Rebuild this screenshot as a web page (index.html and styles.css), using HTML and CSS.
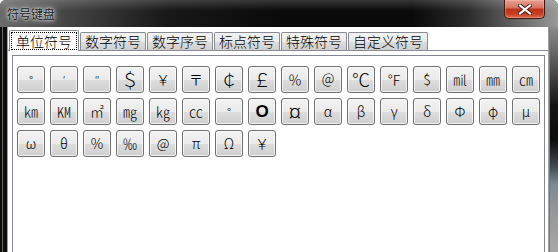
FILE: index.html
```html
<!DOCTYPE html>
<html lang="zh">
<head>
<meta charset="utf-8">
<title>符号键盘</title>
<link rel="stylesheet" href="styles.css">
</head>
<body>
<div class="window">
  <div class="titlebar">
    <span class="title">符号键盘</span>
    <div class="close">
      <svg width="14" height="11" viewBox="0 0 14 11">
        <path d="M2 1.5 L12 9.5 M12 1.5 L2 9.5" stroke="#3b1a14" stroke-width="4" stroke-linecap="square"/>
        <path d="M2 1.5 L12 9.5 M12 1.5 L2 9.5" stroke="#ffffff" stroke-width="2.2" stroke-linecap="square"/>
      </svg>
    </div>
  </div>
  <div class="frame-body">
    <div class="edge-left"></div>
    <div class="client">
      <div class="tabs">
        <div class="tab active"><span class="focus">单位符号</span></div>
        <div class="tab">数字符号</div>
        <div class="tab">数字序号</div>
        <div class="tab">标点符号</div>
        <div class="tab">特殊符号</div>
        <div class="tab">自定义符号</div>
      </div>
      <div class="panel">
        <div class="box">
          <div class="grid">
            <button class="key small">°</button>
            <button class="key small">′</button>
            <button class="key small">″</button>
            <button class="key big">＄</button>
            <button class="key">￥</button>
            <button class="key">〒</button>
            <button class="key big">￠</button>
            <button class="key big">￡</button>
            <button class="key">％</button>
            <button class="key">＠</button>
            <button class="key big">℃</button>
            <button class="key">℉</button>
            <button class="key">$</button>
            <button class="key">㏕</button>
            <button class="key">㎜</button>
            <button class="key">㎝</button>

            <button class="key">㎞</button>
            <button class="key">㏎</button>
            <button class="key">㎡</button>
            <button class="key">㎎</button>
            <button class="key">㎏</button>
            <button class="key">㏄</button>
            <button class="key small">°</button>
            <button class="key bold">O</button>
            <button class="key huge">¤</button>
            <button class="key">α</button>
            <button class="key">β</button>
            <button class="key">γ</button>
            <button class="key">δ</button>
            <button class="key">Φ</button>
            <button class="key">φ</button>
            <button class="key">μ</button>

            <button class="key">ω</button>
            <button class="key">θ</button>
            <button class="key">%</button>
            <button class="key">‰</button>
            <button class="key">@</button>
            <button class="key">π</button>
            <button class="key">Ω</button>
            <button class="key">￥</button>
          </div>
        </div>
      </div>
    </div>
    <div class="edge-right"></div>
  </div>
</div>
</body>
</html>
```

FILE: styles.css
```css
* { box-sizing: border-box; }

html, body {
  margin: 0;
  padding: 0;
  width: 558px;
  height: 252px;
  overflow: hidden;
  background: #ffffff;
}

.window {
  width: 558px;
  height: 252px;
  display: flex;
  flex-direction: column;
  border-radius: 6px 6px 0 0;
  overflow: hidden;
  background: #101010;
}

.titlebar {
  height: 27px;
  flex: none;
  display: flex;
  align-items: flex-start;
  justify-content: space-between;
  padding: 0 13px 0 7px;
  background:
    linear-gradient(to bottom, rgba(255,255,255,0.18) 0, rgba(255,255,255,0) 40%),
    linear-gradient(to right, #6a6a6a 0, #444 12%, #181818 30%, #0a0a0a 50%, #0a0a0a 74%, #2c2c2c 84%, #6e6e6e 94%, #9a9a9a 100%);
}

.title {
  margin-top: 5px;
  font-family: "Noto Sans CJK SC", sans-serif;
  font-size: 12px;
  line-height: 17px;
  color: #1a1a1a;
  text-shadow: 0 0 2px #e6e6e6, 0 0 4px #d0d0d0, 0 0 7px #b0b0b0, 0 0 10px #909090;
}

.close {
  width: 41px;
  height: 19px;
  display: flex;
  align-items: center;
  justify-content: center;
  border: 1px solid #41170f;
  border-top: none;
  border-radius: 0 0 5px 5px;
  background: linear-gradient(to bottom, #e7a395 0%, #d7745f 42%, #c0321b 52%, #c63a22 75%, #dc6a4c 100%);
  box-shadow: inset 0 0 0 1px rgba(255,200,180,0.35);
}

.frame-body {
  flex: 1;
  display: flex;
  min-height: 0;
}

.edge-left {
  width: 7px;
  flex: none;
  background: linear-gradient(to right, #0c0c0c 0 2px, #6a6a6a 2px 3px, #0e0e0e 3px 7px);
}

.edge-right {
  width: 9px;
  flex: none;
  background:
    linear-gradient(to right, #7a7a7a 0 1px, rgba(0,0,0,0) 1px),
    linear-gradient(to bottom, #8c8c8c 0%, #5a5a5a 15%, #151515 35%, #0c0c0c 50%, #3d4a52 62%, #7a8a94 70%, #9a9a9a 85%, #a8a8a8 100%);
}

.client {
  flex: 1;
  display: flex;
  flex-direction: column;
  background: #ffffff;
  border-left: 1px solid #a0a0a0;
  border-right: 1px solid #a0a0a0;
  min-width: 0;
}

.tabs {
  height: 23px;
  flex: none;
  display: flex;
  align-items: flex-end;
  padding-left: 1px;
  gap: 1px;
  position: relative;
  z-index: 1;
}

.tab {
  height: 18px;
  padding: 0 4px;
  border: 1px solid #898c95;
  border-bottom: none;
  border-radius: 2px 2px 0 0;
  background: linear-gradient(to bottom, #f2f2f2 0%, #ebebeb 50%, #dddddd 51%, #cfcfcf 100%);
  font-family: "Noto Sans CJK SC", sans-serif;
  font-size: 14px;
  font-weight: 300;
  line-height: 16px;
  color: #000;
  white-space: nowrap;
}

.tab.active {
  width: 70px;
  height: 21px;
  margin-bottom: -1px;
  padding: 1px 1px 0 1px;
  background: #ffffff;
}

.focus {
  display: block;
  height: 18px;
  border: 1px dotted #000;
  text-align: center;
  line-height: 16px;
}

.panel {
  flex: 1;
  border-top: 1px solid #898c95;
  padding: 4px 3px 0 4px;
  display: flex;
  min-height: 0;
}

.box {
  flex: 1;
  border: 1px solid #828790;
  border-bottom: none;
  padding: 10px 0 0 4px;
}

.grid {
  display: grid;
  grid-template-columns: repeat(16, 28px);
  grid-auto-rows: 27px;
  gap: 5px;
}

.key {
  margin: 0;
  padding: 0;
  width: 28px;
  height: 27px;
  border: 1px solid #707070;
  border-radius: 3px;
  background: linear-gradient(to bottom, #f2f2f2 0%, #ebebeb 50%, #dddddd 51%, #cfcfcf 100%);
  box-shadow: inset 0 0 0 1px rgba(255,255,255,0.7);
  font-family: "Noto Sans CJK SC", "DejaVu Sans", sans-serif;
  font-size: 14px;
  font-weight: 300;
  line-height: 25px;
  color: #000;
  text-align: center;
}

.key.small {
  font-size: 12px;
  line-height: 20px;
}

.key.big {
  font-size: 18px;
}

.key.huge {
  font-size: 22px;
}

.key.bold {
  font-family: "Liberation Sans", sans-serif;
  font-size: 17px;
  font-weight: bold;
}
```
